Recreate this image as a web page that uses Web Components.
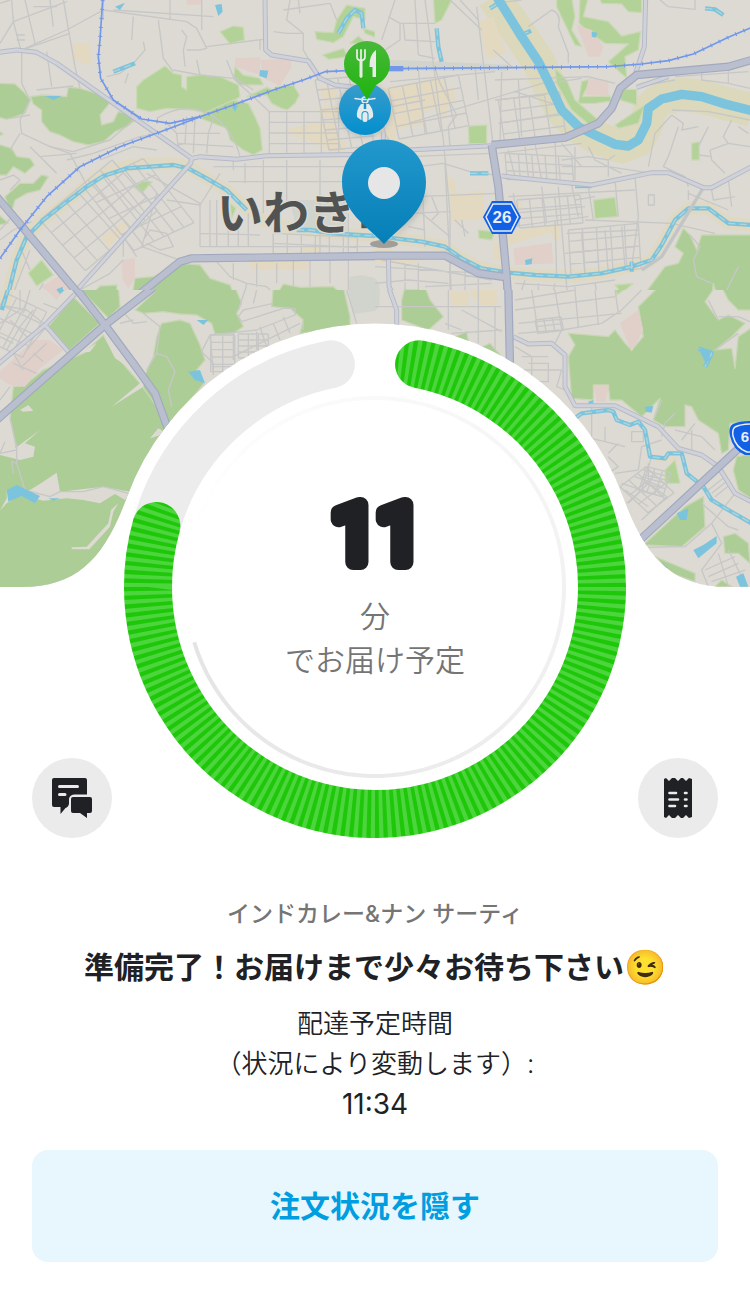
<!DOCTYPE html>
<html lang="ja">
<head>
<meta charset="utf-8">
<meta name="viewport" content="width=device-width, initial-scale=1">
<title>注文状況</title>
<style>
    body {
        margin: 0;
        background: #fff;
        color: #202125;
        font-family: Inter, "Noto Sans CJK JP", sans-serif;
    }
</style>
</head>
<body>
<order-tracker>
    <delivery-map slot="map"></delivery-map>
    <progress-ring slot="ring"></progress-ring>
    <eta-label slot="eta" minutes="11">でお届け予定</eta-label>
    <round-button slot="action" label="チャット">
        <svg viewBox="0 0 40 40" width="40" height="40">
            <path d="M2 0H33Q35 0 35 2V16.500H22Q17.500 17 17 21V26Q16 29.500 13.500 30L8.500 36V29H2Q0 29 0 27V2Q0 0 2 0Z" fill="#202125"/>
            <path d="M21 19H38Q40 19 40 21V33Q40 35 38 35H35V40L28 35H21Q19 35 19 33V21Q19 19 21 19Z" fill="#202125"/>
            <path d="M7.500 8.500H25.500M7.500 16.500H13" stroke="#ebebeb" stroke-width="3" stroke-linecap="round"/>
        </svg>
    </round-button>
    <round-button slot="action" label="レシート">
        <svg viewBox="0 0 40 40" width="40" height="40">
            <path d="M6 1L8 0L11 3L14 0L17 0L20 3L23 0L25 0L28 3L31 0L34 1V39L31 40L28 37L25 40H23L20 37L17 40H14L11 37L8 40L6 39Z" fill="#202125"/>
            <path d="M11.500 15H18M11.500 21.500H20M11.500 28H17M27 15H28.500M27 21.500H28.500M27 28H28.500" stroke="#ebebeb" stroke-width="2.600" stroke-linecap="round"/>
        </svg>
    </round-button>
</order-tracker>
<order-status>
    <span slot="venue">インドカレー&amp;ナン サーティ</span>
    <span slot="title">準備完了！お届けまで少々お待ち下さい</span>
    <span slot="note">配達予定時間<br>（状況により変動します）:</span>
    <time slot="time">11:34</time>
</order-status>
<hide-button>注文状況を隠す</hide-button>

<script>
// Every map sheet is drawn on its own 1125 unit wide grid, three units to a pixel.
const SHEETS = [
    {
        at: [0, 0],
        wood: [
            'M-9 250L45 252 70 275 92 300 75 340 40 352 20 358 -9 350Z',
            'M92 290L130 285 200 290 205 262 240 265 290 280 330 308 300 345 305 375 340 365 355 335 420 350 380 380 345 395 310 425 265 435 220 425 180 405 150 395 125 365 125 330 100 312Z',
            'M405 835L460 830 545 790 600 795 630 835 690 855 707 900H395Z',
            'M270 890L300 858 350 855 352 900H290Z',
            'M820 900L850 852 900 862 1000 860 1040 900Z',
            'M-9 390L10 402 -9 410Z',
            'M-9 432L35 445 50 470 90 475 103 495 75 520 40 500 20 525 -9 525Z',
            'M15 590L60 550 100 550 125 525 145 530 120 570 80 580 45 600 35 635 22 610Z',
            'M-9 640L25 670 -9 675Z'
        ],
        park: [
            'M410 260L430 240 495 198 520 220 545 225 545 260 560 270 560 230 600 225 660 230 715 255 720 290 690 310 620 340 580 330 500 325 450 335 410 325Z',
            'M705 200L730 225 780 235 790 255 720 255 700 235Z',
            'M590 350L700 300 745 310 765 350 780 385 787 450 760 465 730 450 690 420 680 385 640 370Z',
            'M740 290L800 262 820 270 830 260 880 255 898 285 885 310 862 330 845 325 815 310 800 285Z',
            'M660 95L700 78 730 82 733 120 690 132Z',
            'M945 95L1000 98 1010 60 1040 15 1095 25 1095 60 1060 50 1030 110 1000 128 950 118Z',
            'M1090 85L1125 95V112L1095 100Z', 'M1050 130L1075 108 1100 130Z',
            'M968 165L1030 145 1045 170 985 178Z',
            'M85 820L125 780 160 825 110 858Z', 'M400 560L430 543 457 545 425 580Z', 'M690 610L708 625 695 655Z'
        ],
        sand: [
            'M218 130L270 128 272 190H245L240 180 217 178Z', 'M305 710L380 660 388 675 325 742Z',
            'M958 265H1010V305H975Z', 'M955 318H1020V352H960Z', 'M862 388L1000 358 1018 420 1035 425V455H990L940 425 870 405Z',
            'M750 785H925V810H755Z', 'M905 743H960V757H905Z'
        ],
        pink: [
            'M705 175L780 172V225L705 200Z', 'M780 180L870 175 875 200 840 258 790 235Z',
            'M125 860L190 820 230 870 165 895Z', 'M365 780L405 775V835L385 865 368 840Z', 'M560 0H605V14H560Z'
        ],
        grey: ['M1050 830L1085 825 1125 835V900H1040Z', 'M870 600H1040V690H890Z'],
        banks: ['M20 905L30 860 50 780 80 710 130 660 200 605 260 555 310 520 380 498 450 492 520 490 565 500 620 535 680 570 740 625 790 662 870 685 930 692 1000 700 1125 708'],
        river: ['M20 905L30 860 50 780 80 710 130 660 200 605 260 560 310 528 380 505 450 500 520 495 565 505 620 535 680 570 740 630', 'M890 690L930 690 1000 700 1125 708', 'M340 215L405 190', 'M1015 100L1040 55 1065 30 1085 40 1090 85'],
        water: ['M645 15L665 12 668 35 655 48Z', 'M780 210L805 212 800 235 778 228Z', 'M345 20L375 8 360 30Z', 'M135 288L185 288 160 300Z', 'M170 868L188 860 190 878 172 882Z', 'M695 320L715 315 705 335Z'],
        minor: [
            'M0 10L30 0M0 130L40 65 200 5M40 65L35 0M40 65L65 160 65 250 90 300 60 360 65 400 150 440 210 460',
            'M75 0L105 130M75 145L200 90 310 30 560 65 590 85 620 145 600 150 560 150',
            'M150 0L160 80M190 0L225 200 240 265M210 100L80 145M50 105H75M50 120H75M100 20H170M310 0V60M400 50L395 120M475 60L490 175 520 215',
            'M510 0V60M605 0V90M340 30L640 50M620 140L790 118M545 90L560 110 550 150 555 200M140 155L155 260M30 355L90 345M110 270L220 258',
            'M430 125L435 150 400 190 360 220 320 230M385 220L375 250M780 120V150M820 95L860 100 910 100V150L930 185M870 0L860 60 910 100',
            'M850 30L990 10M900 40L895 0M990 10L1010 60M590 180L600 225M680 180L700 230 760 270M520 210L600 225 700 235 760 290 808 335',
            'M470 355Q560 300 640 350Q700 390 720 470M500 370L530 400 535 450M560 350L555 430 520 440M585 350L580 460M640 355L625 400 620 460M530 400L660 400M535 430L700 440',
            'M150 440L220 455 330 420 400 360M200 480L280 460 420 410 480 400M300 480L400 440 470 450M60 400L30 450M90 440L170 520M210 460L260 555M120 470L230 460',
            'M600 610L510 560 440 520M500 600L600 615 660 520M600 610V740M600 700L780 705M630 600V740M650 600V740M685 640V740M715 640V740M745 640V740M700 510V480M735 490V550M685 545H1125M790 480V640M860 480V620M640 500H1125M600 740H1125M820 700V760M960 480V760M1045 640V900',
            'M430 720L450 690 500 700 520 740 480 750 440 730M440 690L425 740 540 780M470 580L440 690M370 700V770M370 710L410 770M0 720L40 690 95 665M0 690L45 640',
            'M60 740L90 810M90 750L40 880M240 870L330 820 370 780M100 900L130 850M650 785L690 830 740 850 800 860 840 900M700 790V840M740 850L730 900M770 790V860M830 790V850M880 770V860M930 770V860M990 770V850',
            'M0 540L40 525 60 540 30 570'
        ],
        grids: [
            [120, 660, 36, -30, 34, 38, 6, 4], [250, 560, 30, -14, 38, 48, 6, 4],
            [808, 335, 52, 0, 0, 32, 4, 4], [945, 240, 34, -3, 6, 30, 6, 7], [820, 700, 42, 2, 0, 30, 6, 2]
        ],
        secondary: ['M-5 157L50 150 110 157 170 190 575 475 600 470 710 478 800 467 1130 463', 'M795 -5L797 150 815 165 925 183 960 235 1005 255 1060 262', 'M575 475L572 490 240 860 200 905'],
        trunk: ['M-10 590L75 690 255 905', 'M390 905L540 785 575 775 740 773 1130 768'],
        rail: ['M308 0L300 120 295 170 302 235 340 300 425 357 510 370 600 350', 'M0 775L60 690 140 590 240 500 360 440 510 385 615 345 700 315 820 270 910 240 975 215 1125 208']
    },
    {
        at: [375, 0],
        wood: [
            'M925 685L945 705 965 750 980 705H1135V900H1030L1015 850 1010 900H795L870 800 910 790 925 760 900 740Z',
            'M80 900L90 870 130 870 152 900Z'
        ],
        park: [
            'M175 -9H235L200 60 180 70Z', 'M545 -9H590L600 50 590 90 620 140 600 135 545 20Z',
            'M615 -9H640L625 50 700 65 740 108 797 95 790 150 750 170 755 235 700 185 740 150 760 132 690 130 640 95 612 70Z',
            'M672 -9H800V38L760 35 740 12 680 10Z', 'M610 310L620 245 650 235 622 290 705 288 710 303 660 310Z',
            'M735 268H785V315L735 300Z', 'M280 378L335 375V430L282 432Z', 'M950 430L973 425V480H950Z',
            'M655 600L720 592 728 650 660 655Z', 'M310 690L360 695 350 720 312 715Z', 'M720 855L775 850 740 880Z',
            'M540 205L575 240 600 300 670 360 640 372 590 330 545 250Z', 'M720 375L780 335 810 315 790 370 730 385Z'
        ],
        sand: [
            'M310 65L355 50 393 160 335 175Z', 'M25 265L205 230 210 265 240 265 238 300 215 320 215 355 195 355 190 325 145 335 150 375 50 390 30 340Z',
            'M245 582L325 570V655L230 665 225 580 215 535H235Z', 'M385 700L555 670V715L535 720 530 695 400 735Z', 'M225 880H365V905H225Z', 'M355 725L380 735V780H355Z', 'M0 385H60V420L100 430V450L40 450Z', 'M400 605H440V630H400Z', 'M0 740L130 770V788H0Z'
        ],
        pink: ['M415 745L530 728 535 790 420 795Z', 'M605 75L650 90 685 140 675 170H640Z', 'M640 235L700 240V285H632Z'],
        grey: ['M45 180L140 183 300 190 400 195V212L45 212Z', 'M0 835L12 850 15 900H0Z'],
        banks: [
            'M-5 705L60 715 140 725 210 740 260 775 320 805 400 818 480 825 580 830 680 820 770 800 830 780 860 735 900 660 940 625 1000 625 1060 670 1130 675'
        ],
        widebanks: ['M355 -10L440 110 490 185 520 250 560 330 610 380 670 415 740 440 790 420 815 370 825 325 860 295 920 283 980 290 1050 310 1130 330'],
        river: ['M-5 705L60 715 140 725 210 740 260 775 320 805 400 818 480 825 580 830 680 820 770 800 830 780 860 735 900 660 940 625 1000 625 1060 670 1130 675', 'M185 85L190 140 200 185', 'M285 520H340', 'M440 105L468 92', 'M345 25L370 10', 'M770 785V815', 'M990 25L1020 28 1045 45', 'M600 558H650'],
        wideriver: ['M365 -10L440 110 490 185 520 245 560 330 610 380 660 405 720 433 760 438 790 420 815 370 820 325 860 297 920 283 980 290 1050 312 1130 332'],
        water: ['M650 95L668 98 662 113 650 110Z', 'M450 780L472 775 470 792 452 795Z'],
        minor: [
            'M20 120L60 0M40 50L75 70 75 120 30 150M75 70L180 70M120 0L130 165M85 70L90 120 180 125M130 165L180 175M225 0L320 90M255 0L310 60M150 0L205 420 225 640V900',
            'M305 20L355 440M45 245L360 215M130 210L150 400M180 205L195 250 245 345 220 380 225 440M355 150L410 200M355 10L440 0M460 80L530 30Q560 40 550 80L580 160V190',
            'M100 370L520 245M360 240L500 235 640 230 720 250M380 215L375 430M430 240L440 410M360 300L510 285M370 370L560 340M420 275L560 320M300 200L310 300M520 250L620 235',
            'M100 470L350 460M130 500L205 490 285 515 360 525M120 590L370 580M210 490L230 900M140 500L150 740M100 640L225 635M370 460L620 430M480 430L500 540M540 420L545 540M400 450L420 530M450 440L460 530',
            'M560 480L640 470 700 480 720 465M640 440L660 480 740 520M560 430L620 500M560 500H700L830 520M700 480V530M600 440V540',
            'M400 590L780 570M410 640L630 620M415 580L430 680M500 560L515 670M550 560L575 860 580 900M590 555L610 650M640 560L655 660M720 540L730 650M780 530L790 650 770 800M630 660L890 670 1020 700',
            'M410 680L640 650M540 660L545 830M575 700L790 690M620 700L630 830M690 690L700 820M740 680L750 800M570 760L780 740M820 585H838V615H820ZM600 600L660 590',
            'M890 345L840 400 820 500M890 345L925 370 920 390 970 380M910 380L880 470 865 500 930 530 940 560M1070 360L1045 410 1060 430 1005 450 1010 480 1050 520M970 465L1010 470M1000 380L970 440M890 330L1000 335 1125 360M1120 400L1090 380M1125 440L1060 430',
            'M940 580L1060 630M1010 570L1015 600 1080 590M940 570V600M1060 540L1070 620M945 705L975 740 955 780 965 830 1010 850M1090 800L1050 880',
            'M855 0L880 20 960 28V0M1060 200V250L1125 265M980 210V240L1060 250M1120 215L900 230M790 260L900 240',
            'M90 790V900M130 790V900M0 800L320 820M20 780L350 840M270 800V900M310 820V900M0 850L100 840 220 850M150 860L350 850M420 850L580 860 720 840M430 900L450 840M490 850V900M540 850L530 900M600 860V900M660 850L670 900',
            'M0 220L30 400 60 450M0 330L150 300M10 500L140 505M140 640L225 710M240 660L280 700M170 590L190 640 170 660M260 660L270 710M100 680L150 690'
        ],
        grids: [
            [40, 265, 42, -8, 8, 38, 5, 4], [370, 300, 46, -6, 5, 34, 4, 4], [390, 460, 40, 2, 2, 26, 5, 3], [580, 690, 42, -4, 2, 34, 5, 4], [425, 600, 38, -3, 3, 28, 5, 3]
        ],
        secondary: ['M-5 463L100 450 350 437', 'M380 528L545 545 650 555 830 518 880 518 985 563 1010 563 1130 500', 'M812 -5L808 140 780 225', 'M785 262L880 230', 'M40 765L42 860 65 905', 'M25 395V420'],
        lane: ['M985 563L860 770 800 810'],
        trunk: ['M-5 767H210L310 820 395 832', 'M350 435L370 560 395 832 400 905', 'M350 435L570 413 670 370 710 325 735 265 785 225 1060 200 1130 180'],
        rail: ['M45 206L400 203 700 200 800 192 880 182 955 162 1060 112 1130 82'],
        station: ['M0 206H85']
    },
    {
        at: [0, 290],
        wood: [
            'M145 110L220 20 300 100 205 185Z', 'M235 -9H355L360 50 325 85Z',
            'M405 60L470 0 480 -9H705L725 40 710 70 730 110 700 130 645 132 635 100 590 75 540 72 490 65 430 70Z',
            'M485 100L540 90 570 100 600 165 615 210 590 240 612 280 480 440 420 285 460 200 470 140Z',
            'M30 385L40 290 70 288 130 240 250 190 310 135 350 200 420 280 470 350 500 430 420 590 300 810 200 910H-9V490L48 470Z',
            'M815 50L820 -9H1030L1050 80 1050 110 900 130 910 90 870 55Z'
        ],
        clear: [
            'M0 400L30 385 45 475 120 420 75 460 105 470 100 500 60 510 0 495Z',
            'M0 662L20 625 20 600 90 600 125 578 170 548 180 605 310 590 390 605 375 630 345 612 300 640 250 630 200 625 130 632 60 615 20 640Z',
            'M335 350L420 280 440 240 430 290Z', 'M215 772L260 770 325 700 333 660 355 640 340 665 330 710 268 778H215Z',
            'M310 135L385 230 345 205Z', 'M60 360L85 345 100 362 70 365Z', 'M240 190L290 160 270 185ZM450 445L475 415 500 430Z'
        ],
        pink: ['M0 245L100 150 150 150 190 180 120 235 75 290 30 285 0 265Z', 'M130 -9H200L170 30Z'],
        grey: ['M1045 0H1125V62L1060 72Z'],
        banks: ['M25 -10L10 60'],
        river: ['M25 -5L5 60'],
        water: ['M565 245L600 240 615 280 585 270Z', 'M20 600L50 585 120 618 105 640 65 618 25 635Z', 'M590 90H625L610 105Z', 'M165 -5H200L180 12Z', 'M145 625L180 625 160 632Z'],
        minor: [
            'M0 45L80 60 130 100M0 100L60 60 60 0M100 60L60 110 20 180M140 110L80 180M90 0L70 70M130 40L180 60M0 140L40 160M30 90L90 150M40 190L70 240M0 330L30 290M30 385L50 470 50 520 75 600 150 620 180 605 250 605 310 590 385 610',
            'M50 520L35 515 40 550M15 455L0 490 50 480M355 50L400 100 440 95M430 70L480 110 470 190 440 240M470 190L500 200 525 245 505 300 515 350M360 100L400 90',
            'M715 80L730 60 820 40M715 80L725 95 850 55 885 55 885 75 770 120 630 135 605 185 640 220V255M735 0L715 60M770 0L760 40M700 130V210M630 135L640 250M770 125V180M850 80L870 130M910 90V120M640 230H720M1040 0L1070 100',
            'M700 200L900 100M780 110L800 170M820 100L840 150',
            'M60 235L140 160M40 220L110 250M100 190L130 215'
        ],
        grids: [[632, 135, 36, 0, 0, 22, 2, 5], [715, 132, 30, 0, 0, 18, 3, 4], [20, 10, 30, 14, -18, 34, 4, 4]],
        secondary: ['M-5 222L135 105 225 12', 'M135 105L205 185'],
        trunk: ['M-10 390L315 105 470 -15', 'M220 -15L315 105 400 220 465 310 505 420'],
        rail: []
    },
    {
        at: [375, 290],
        wood: [
            'M790 50L850 -9H1020L990 35 1030 90 1060 75 1110 100 1070 140 1020 180 1070 175 1080 235 1090 140 1135 110V395L1065 400 1060 480 1040 490 1030 430 970 390 950 350 930 345 930 410 870 410 835 390 855 325 800 380 740 330 705 330 700 285 655 285 655 330 590 325 580 200 600 165 580 130 700 140 720 120 750 160 770 180 805 140Z',
            'M80 30L90 -9 150 -9 165 30 205 80 160 120 80 90Z', 'M1040 -9H1135V60L1090 60 1060 30Z',
            'M240 140L275 125 280 155Z', 'M300 180L345 160 380 200 385 230Z',
            'M1075 540L1085 500 1135 490V630L1090 600Z', 'M805 765L930 650 985 620 990 710 920 770Z',
            'M1045 740L1080 730 1120 760 1125 820 1090 790 1050 790Z', 'M840 800L900 825 960 850 960 875 890 850Z', 'M1020 890L1040 870 1070 890Z'
        ],
        park: ['M870 540L900 510 915 580 870 580Z', 'M720 -9H760L725 15Z'],
        sand: ['M225 5H280V45H228ZM290 -5H365V45H320L290 20Z', 'M840 500H910V515H840Z'],
        pink: ['M735 100L790 60 805 120 770 185 755 150Z', 'M655 285H703L690 335H665Z'],
        grey: ['M0 0H15L12 50 0 62Z'],
        banks: [],
        river: ['M600 385L620 370 700 360 715 365 725 390 765 405 790 395 810 420 825 500 870 505 880 490 920 490 935 550 985 590 1010 630 1060 660 1130 700', 'M970 175L1010 190 990 230'],
        water: ['M640 335L655 330V342L642 345ZM810 350L835 348 830 368 812 365Z', 'M970 175L1010 180 995 225 985 205Z', 'M905 670L940 655 935 690 915 690Z', 'M955 780L985 765 1025 738 1025 760 1000 780 970 805Z', 'M1083 860L1105 850 1120 890H1095Z', 'M858 815L880 835 870 835Z'],
        minor: [
            'M220 0V120M0 50H380M260 60L380 125M310 0V160M360 50V180M210 100L260 120M230 130L380 120M420 60L720 20M430 100L740 70M470 0L490 130M540 0L560 120 540 160M600 0L610 110M660 0L670 105M720 0L730 70M420 30L600 0M430 130L560 120 680 100 740 60 800 0',
            'M420 170L470 200V270M440 200H520M420 240H560L545 290 570 300M460 220H520V275H470M650 345V445L750 470M770 425H805V455H770ZM690 410V455M700 500L730 530 700 550M730 460L700 490M720 550L790 540 800 470 860 450M740 580L860 620M760 640L820 580 820 520M800 690L875 620 820 580M750 600L820 650M780 560L860 590',
            'M805 540L880 560M800 560L870 580M830 500L800 600 755 640M860 440L870 400 900 370M900 420L980 440 1020 480M950 420V480M920 450L960 400M1080 610L1010 700 930 770 820 772M980 640L1060 710 1090 720M1010 700L1040 760 980 840 1000 890M1000 600L1050 560M1010 610L1060 570M1020 620L1070 580',
            'M1030 80L1090 80 1125 95M1020 180L1090 130M840 380L860 330M1000 30L1030 90M990 840L1080 800M1000 860L1090 820M1010 875L1110 840M1030 790L1060 890M1060 780L1110 880M1125 440L1095 430'
        ],
        grids: [[480, 90, 26, -3, 4, 20, 3, 2], [735, 590, 26, -20, 28, 26, 3, 3], [815, 530, 24, 6, -8, 24, 3, 3]],
        secondary: ['M415 140L460 162 530 160 570 195V290L600 347H720L850 410 910 475 980 495 1030 530 1080 610 1130 635', 'M40 -10L65 60V110'],
        trunk: ['M400 -5L405 230', 'M795 750L1075 490 1130 440'],
        rail: []
    }
];

const paths = (cls, list = []) => list.map(d => `<path class="${cls}" d="${d}"/>`).join('');

function gridPath([x, y, ux, uy, vx, vy, cols, rows]) {
    let d = '';
    for (let i = 0; i <= cols; i++) {
        d += `M${x + ux * i} ${y + uy * i}l${vx * rows} ${vy * rows}`;
    }
    for (let j = 0; j <= rows; j++) {
        d += `M${x + vx * j} ${y + vy * j}l${ux * cols} ${uy * cols}`;
    }
    return d;
}

function drawSheet(s, index) {
    const [x, y] = s.at;
    const height = y ? 900 : 870;
    return `
        <clipPath id="sheet${index}"><path d="M0 0H1125V${height}H0Z"/></clipPath>
        <g class="sheet" transform="translate(${x} ${y}) scale(.33334)" clip-path="url(#sheet${index})">
            ${paths('banks', s.banks)}${paths('wide banks', s.widebanks)}
            ${paths('grey', s.grey)}${paths('sand', s.sand)}
            ${paths('wood', s.wood)}${paths('park', s.park)}${paths('clear', s.clear)}${paths('pink', s.pink)}
            ${paths('minor', s.minor)}${paths('minor', s.grids.map(gridPath))}
            ${paths('river', s.river)}${paths('river core', s.river)}${paths('wide river', s.wideriver)}${paths('water', s.water)}
            ${paths('lane', s.lane)}
            ${paths('secondary edge', s.secondary)}${paths('secondary', s.secondary)}
            ${paths('trunk edge', s.trunk)}${paths('trunk', s.trunk)}
            ${paths('rail', s.rail)}${paths('rail ties', s.rail)}${paths('station', s.station)}
        </g>`;
}

class DeliveryMap extends HTMLElement {
    connectedCallback() {
        this.attachShadow({ mode: 'open' });
        this.shadowRoot.innerHTML = `
            <style>
                :host { display: block; }
                svg { display: block; width: 100%; height: auto; }
                .sheet { fill: none; stroke-linejoin: round; }
                .wood { fill: #accd96; stroke: #c9d5b4; stroke-width: 4; }
                .park { fill: #b3d298; stroke: #cbd8b6; stroke-width: 4; }
                .clear { fill: #dddad3; }
                .sand { fill: #e3d8c0; }
                .pink { fill: #e0d0c9; }
                .grey { fill: #cbd1cb; fill-opacity: .7; }
                .banks { stroke: #dfd9c4; stroke-width: 38; }
                .wide.banks { stroke: #dbd8bb; stroke-width: 100; }
                .minor { stroke: #c6c7c6; stroke-width: 4; }
                .lane { stroke: #c2c4c5; stroke-width: 10; }
                .river { stroke: #7cc4dd; stroke-width: 13; }
                .river.core { stroke: #b4d3d4; stroke-width: 4; stroke-dasharray: 22 12; }
                .wide.river { stroke-width: 28; }
                .water { fill: #7cc4dd; }
                .secondary { stroke: #d0d2da; stroke-width: 9; }
                .secondary.edge { stroke: #b7bac6; stroke-width: 15; }
                .trunk { stroke: #b9bfcf; stroke-width: 18; }
                .trunk.edge { stroke: #a2a9be; stroke-width: 25; }
                .rail { stroke: #7398ea; stroke-width: 5; }
                .ties { stroke-width: 12; stroke-dasharray: 3 24; }
                .station { stroke: #7398ea; stroke-width: 16; }
                .town {
                    font: 700 46px Inter, "Noto Sans CJK JP", sans-serif;
                    fill: #505352;
                    stroke: #dddad3;
                    stroke-width: 3px;
                    paint-order: stroke;
                }
                .route { font: 700 17px "Liberation Sans", sans-serif; fill: #e8eefb; text-anchor: middle; }
                .small { font-size: 15px; }
            </style>
            <svg viewBox="0 0 750 587" role="img" aria-label="配達マップ">
                <defs>
                    <clipPath id="edge">
                        <path d="M0 0H750V587H728C672 587 645 557 623 497A264 264 0 0 0 127 497C105 557 78 587 22 587H0Z"/>
                    </clipPath>
                    <linearGradient id="blue" x2="0" y2="1"><stop stop-color="#2298cd"/><stop offset="1" stop-color="#057fb7"/></linearGradient>
                    <linearGradient id="sky" x2="0" y2="1"><stop stop-color="#3a9ccb"/><stop offset="1" stop-color="#028fce"/></linearGradient>
                    <linearGradient id="green" x2="0" y2="1"><stop stop-color="#48b83a"/><stop offset="1" stop-color="#1fb40d"/></linearGradient>
                    <filter id="soft" x="-30%" y="-30%" width="160%" height="160%"><feGaussianBlur stdDeviation="3"/></filter>
                </defs>
                <g clip-path="url(#edge)">
                    <rect width="750" height="587" fill="#dddad3"/>
                    ${SHEETS.map(drawSheet).join('')}
                    <text class="town" x="217" y="229">いわき市</text>
                    <path d="M492 201H512L521 217 512 234H492L483 217Z" fill="#1260e4"/>
                    <path d="M493 204H511L518 217 511 231H493L486 217Z" fill="none" stroke="#e8eefb" stroke-width="1.500"/>
                    <text class="route" x="502" y="223">26</text>
                    <path d="M752 421Q740 421 733 424Q728 427 730 436Q733 450 745 455H765V421Z" fill="#1260e4"/>
                    <path d="M752 424Q741 424 735 427Q732 429 733 436Q736 448 747 452H765" fill="none" stroke="#e8eefb" stroke-width="1.500"/>
                    <text class="route small" x="745" y="442">6</text>
                </g>
                <circle cx="365" cy="110" r="26" fill="#6f8794" opacity=".4" filter="url(#soft)"/>
                <circle cx="365" cy="109" r="26" fill="url(#sky)"/>
                <g fill="none" stroke="#e3ebef" stroke-linecap="round">
                    <path d="M355 98.500L362 99.500H368L375 98.500" stroke-width="1.500"/>
                    <circle cx="365" cy="100" r="3" stroke-width="1.500"/>
                </g>
                <path d="M361 104H369Q374 110 373 117L369 120H361L357 117Q356 110 361 104Z" fill="#e3ebef"/>
                <path d="M365 103V109" stroke="#1994cb" stroke-width="2.500"/>
                <rect x="361.500" y="111" width="7" height="12" rx="3.500" fill="#1994cb"/>
                <rect x="362.500" y="112" width="5" height="10" rx="2.500" fill="#e3ebef"/>
                <path d="M367 41A23 23 0 0 1 390 64C390 74 384 81 376 85L367 100 358 85C350 81 344 74 344 64A23 23 0 0 1 367 41Z" fill="url(#green)"/>
                <path d="M357 50V57Q357 60 361 60.500 365 60 365 57V50M361 50V77" fill="none" stroke="#e8ece6" stroke-width="1.800" stroke-linecap="round"/>
                <path d="M359.500 60H362.500V77H359.500ZM376 50V77H372.500V67H369.500Q369 55 376 50Z" fill="#e8ece6"/>
                <ellipse cx="384" cy="244" rx="14" ry="4" fill="#777" opacity=".6"/>
                <path d="M404 228Q430 204 424 190L390 240Z" fill="#777" opacity=".35" filter="url(#soft)"/>
                <path d="M384 139.500C408 139.500 426 158 426 182C426 212 402 225 384 244C366 225 342 212 342 182C342 158 360 139.500 384 139.500Z" fill="url(#blue)"/>
                <circle cx="384" cy="183" r="16" fill="#e6e6e6"/>
            </svg>
        `;
    }
}

// Angles run clockwise in degrees from twelve o'clock.
function arc(cx, cy, r, from, to) {
    const point = a => {
        const t = (a - 90) * Math.PI / 180;
        return `${(cx + r * Math.cos(t)).toFixed(2)} ${(cy + r * Math.sin(t)).toFixed(2)}`;
    };
    return `M${point(from)}A${r} ${r} 0 ${to - from > 180 ? 1 : 0} 1 ${point(to)}`;
}

class ProgressRing extends HTMLElement {
    connectedCallback() {
        this.attachShadow({ mode: 'open' });
        let tail = '';
        // thin inner ring, fading out anticlockwise from its head at 253 degrees
        for (let a = -75; a < 253; a += 2) {
            const strength = Math.min(1, (a + 75) / 328);
            tail += `<path d="${arc(375, 587, 189, a, Math.min(253, a + 2))}" stroke-opacity="${(strength * .105).toFixed(3)}"/>`;
        }
        this.shadowRoot.innerHTML = `
            <style>
                :host { display: block; }
                svg { display: block; width: 100%; height: auto; }
            </style>
            <svg viewBox="0 0 750 838" fill="none" aria-hidden="true">
                <mask id="done" maskUnits="userSpaceOnUse" x="0" y="0" width="750" height="838">
                    <path d="${arc(375, 587, 227, 11.2, 285.6)}" stroke="#fff" stroke-width="48" stroke-linecap="round"/>
                </mask>
                <path d="${arc(375, 587, 227, 286, 348.8)}" stroke="#ececec" stroke-width="48" stroke-linecap="round"/>
                <g mask="url(#done)">
                    <circle cx="375" cy="587" r="227" stroke="#1fc70a" stroke-width="50"/>
                    <circle cx="375" cy="587" r="227" stroke="#4cd53c" stroke-width="50" pathLength="360" stroke-dasharray="1 1"/>
                </g>
                <g stroke="#000" stroke-width="4">${tail}</g>
            </svg>
        `;
    }
}

class EtaLabel extends HTMLElement {
    connectedCallback() {
        this.attachShadow({ mode: 'open' });
        this.shadowRoot.innerHTML = `
            <style>
                :host { display: block; text-align: center; }
                p { margin: 0; }
                svg { display: block; margin: 0 auto; }
                .minutes {
                    font: 400 80px Roboto, sans-serif;
                    text-anchor: middle;
                    fill: #202125;
                    stroke: #202125;
                    stroke-width: 16px;
                    stroke-linejoin: round;
                }
                .caption { color: #757575; font-size: 30px; line-height: 44px; font-weight: 350; }
            </style>
            <svg width="160" height="128" viewBox="0 0 160 128">
                <text class="minutes" x="82" y="96">${this.getAttribute('minutes')}</text>
            </svg>
            <p class="caption">分</p>
            <p class="caption"><slot></slot></p>
        `;
    }
}

class RoundButton extends HTMLElement {
    connectedCallback() {
        this.attachShadow({ mode: 'open' });
        this.shadowRoot.innerHTML = `
            <style>
                :host { display: block; }
                button {
                    display: grid;
                    place-items: center;
                    width: 80px;
                    height: 80px;
                    padding: 0;
                    border: 0;
                    border-radius: 50%;
                    background: #ebebeb;
                    cursor: pointer;
                }
            </style>
            <button type="button" aria-label="${this.getAttribute('label')}"><slot></slot></button>
        `;
    }
}

class OrderTracker extends HTMLElement {
    connectedCallback() {
        this.attachShadow({ mode: 'open' });
        this.shadowRoot.innerHTML = `
            <style>
                :host { display: grid; }
                .layer { grid-area: 1 / 1; min-width: 0; }
                .eta { align-self: end; justify-self: center; padding-bottom: 156px; }
                .actions {
                    align-self: end;
                    display: flex;
                    justify-content: space-between;
                    padding: 0 32px;
                }
            </style>
            <div class="layer"><slot name="map"></slot></div>
            <div class="layer"><slot name="ring"></slot></div>
            <div class="layer eta"><slot name="eta"></slot></div>
            <div class="layer actions"><slot name="action"></slot></div>
        `;
    }
}

class OrderStatus extends HTMLElement {
    connectedCallback() {
        this.attachShadow({ mode: 'open' });
        this.shadowRoot.innerHTML = `
            <style>
                :host { display: block; padding: 60px 32px 26px; text-align: center; }
                h2, h1, p { margin: 0; }
                h2 { color: #757575; font-size: 23px; font-weight: 500; line-height: 32px; }
                h1 {
                    display: flex;
                    align-items: center;
                    justify-content: center;
                    padding: 17px 0;
                    font-size: 30px;
                    font-weight: 700;
                    line-height: 40px;
                }
                .emoji { font-size: 34px; }
                p { font-size: 26px; font-weight: 350; line-height: 40px; text-spacing-trim: space-all; }
                .time { font-size: 28px; font-weight: 400; }
            </style>
            <h2><slot name="venue"></slot></h2>
            <h1><slot name="title"></slot><span class="emoji">😉</span></h1>
            <p><slot name="note"></slot></p>
            <p class="time"><slot name="time"></slot></p>
        `;
    }
}

class HideButton extends HTMLElement {
    connectedCallback() {
        this.attachShadow({ mode: 'open' });
        this.shadowRoot.innerHTML = `
            <style>
                :host { display: block; padding: 0 32px 32px; }
                button {
                    width: 100%;
                    padding: 34px 16px;
                    border: 0;
                    border-radius: 16px;
                    background: #e8f6fd;
                    color: #009de0;
                    font: inherit;
                    font-size: 30px;
                    font-weight: 700;
                    line-height: 44px;
                    cursor: pointer;
                }
            </style>
            <button type="button"><slot></slot></button>
        `;
    }
}

customElements.define('delivery-map', DeliveryMap);
customElements.define('progress-ring', ProgressRing);
customElements.define('eta-label', EtaLabel);
customElements.define('round-button', RoundButton);
customElements.define('order-tracker', OrderTracker);
customElements.define('order-status', OrderStatus);
customElements.define('hide-button', HideButton);
</script>
</body>
</html>
